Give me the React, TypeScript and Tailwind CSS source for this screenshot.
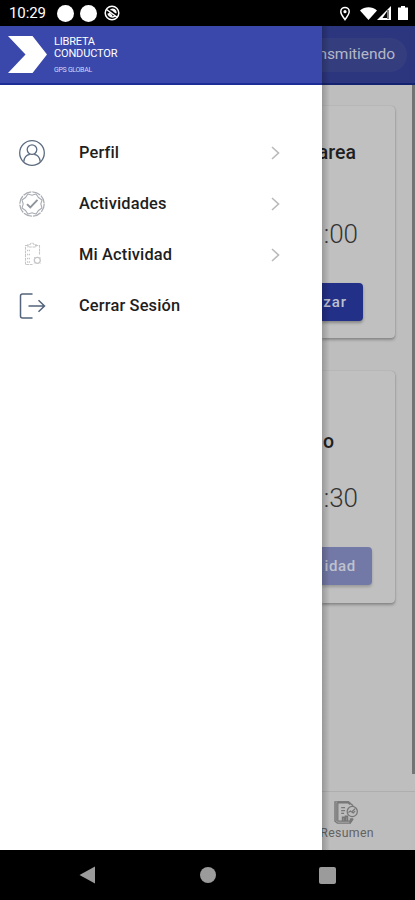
import type { ReactNode } from "react";

const Chevron = () => (
  <svg className="mb-[1px] h-[14px] w-[9px]" viewBox="0 0 9 14" fill="none" stroke="#b9b9bb" strokeWidth="1.6">
    <path d="M1 1l6.5 6L1 13" />
  </svg>
);

const ProfileIcon = () => (
  <svg className="mb-[2px] size-[28px]" viewBox="0 0 28 28" fill="none" stroke="#5d6b80" strokeWidth="1.3">
    <circle cx="14" cy="14" r="12.3" />
    <circle cx="14" cy="10.6" r="4.8" />
    <path d="M5.8 22.8c.4-4.7 3.2-7 6-7.4M22.2 22.8c-.4-4.7-3.2-7-6-7.4" />
  </svg>
);

const BadgeIcon = () => (
  <svg className="mb-[2px] size-[28px]" viewBox="0 0 28 28" fill="none" stroke="#a9adb3">
    <circle cx="14" cy="14" r="12.2" strokeWidth="1.3" strokeDasharray="8.5 1.08" />
    <path d="M10 4l4 1.2L18 4l2.500 3.500L24 10l-1.200 4 1.200 4-3.500 2.500L18 24l-4-1.200L10 24l-2.500-3.500L4 18l1.200-4L4 10l3.500-2.500z" strokeWidth="1.1" />
    <path d="M9 14.200l3.300 3.300 7.200-7.700" stroke="#8e949c" strokeWidth="1.9" />
  </svg>
);

const TaskIcon = () => (
  <svg className="mb-[2px] size-[28px]" viewBox="0 0 28 28" fill="none" stroke="#c6c6c8">
    <path d="M10 4.500H7.500v19h7M17 4.500h4.500v9M10 6V3.500h2l1-1.300h2l1 1.300h2V6z" strokeWidth="1.1" strokeDasharray="3 .7" />
    <path d="M9 9.500h3M9 13.500h3M9 17.500h3M9 21h3" strokeWidth="1.6" strokeDasharray="1.3 .7" />
    <circle cx="19.300" cy="19.300" r="3" strokeWidth="1.3" />
    <path d="M16.200 16.200l1 1m4.200 4.200l1 1m-6.200 0l1-1m4.200-4.200l1-1" />
  </svg>
);

const LogoutIcon = () => (
  <svg className="mb-[2px] size-[28px]" viewBox="0 0 28 28" fill="none" stroke="#53647c" strokeWidth="1.5">
    <path d="M14.500 2H4.500q-2 0-2 2v20q0 2 2 2h10" />
    <path d="M10.500 14H26M20.500 8.200l6 5.800-6 5.800" />
  </svg>
);

function Item({ icon, label, arrow = true }: { icon: ReactNode; label: string; arrow?: boolean }) {
  return (
    <li className="flex h-[51px] items-center pr-[42px] pl-[18px]">
      {icon}
      <span className="ml-[33px] flex-1 text-[16.400px] font-medium tracking-[0.16px] text-[#1e1e1e]">{label}</span>
      {arrow && <Chevron />}
    </li>
  );
}

function StatusBar() {
  return (
    <div className="flex h-[26px] items-center bg-black pl-[9px] text-white">
      <span className="w-[39px] text-[15px] leading-none tracking-[-0.1px]">10:29</span>
      <i className="ml-[9px] size-[17px] rounded-full bg-white" />
      <i className="ml-[6px] size-[17px] rounded-full bg-white" />
      <svg className="ml-[7px] size-[16px]" viewBox="0 0 16 16" fill="none" stroke="white" strokeWidth="1.5">
        <circle cx="8" cy="8" r="6.800" />
        <path d="M2.500 4.500l11 8M4 8.500c1 3 4 4.500 7 2.600M6.500 5c3-2 5.500 0 5.500 3.200M5 8l3 3M8.500 5l3 2.500" />
      </svg>
      <svg className="ml-[219px] h-[15px] w-[12px]" viewBox="0 0 12 16" fill="none" stroke="white" strokeWidth="1.6">
        <path d="M6 14.500C4 11.500 1.500 9 1.500 6a4.500 4.500 0 019 0c0 3-2.500 5.500-4.500 8.500z" />
        <circle cx="6" cy="6" r="1.700" fill="white" stroke="none" />
      </svg>
      <svg className="ml-[9px] h-[13px] w-[17px]" viewBox="0 0 17 13" fill="white">
        <path d="M0 3.600C5-.8 12-.8 17 3.600L8.500 13z" />
      </svg>
      <svg className="h-[14px] w-[14px]" viewBox="0 0 14 14">
        <path d="M14 0v14H0z" fill="white" />
        <path d="M10 5.500V12H5.500z" fill="black" />
        <path d="M11 4v9" stroke="black" strokeWidth="1" />
      </svg>
      <svg className="ml-[7px] h-[14px] w-[10px]" viewBox="0 0 10 14" fill="white">
        <path d="M3 0h4v1.500h3V14H0V1.500h3z" />
      </svg>
    </div>
  );
}

function Drawer() {
  return (
    <aside className="flex w-[322px] shrink-0 flex-col bg-white">
      <header className="flex h-[59px] shrink-0 border-b-2 border-[#1d2d98] bg-[#3a48ab] pt-[10px] pl-[8px]">
        <svg className="h-[37px] w-[39px]" viewBox="0 0 39 37" fill="white">
          <path d="M0 0h24.500L39 18.500 24.500 37H0l17.500-18.500z" />
        </svg>
        <div className="ml-[7px] whitespace-nowrap text-white">
          <div className="text-[11px] leading-[12px] tracking-[-0.200px]">LIBRETA</div>
          <div className="text-[11px] leading-[12px] tracking-[-0.150px]">CONDUCTOR</div>
          <div className="mt-[6px] text-[7px] leading-[9px] tracking-[-0.300px] text-[#d3d7f4]">GPS GLOBAL</div>
        </div>
      </header>
      <ul className="pt-[43px]">
        <Item icon={<ProfileIcon />} label="Perfil" />
        <Item icon={<BadgeIcon />} label="Actividades" />
        <Item icon={<TaskIcon />} label="Mi Actividad" />
        <Item icon={<LogoutIcon />} label="Cerrar Sesión" arrow={false} />
      </ul>
    </aside>
  );
}

function Page() {
  return (
    <main className="relative flex w-[93px] flex-col overflow-hidden bg-[#bebebe]">
      <header className="flex h-[59px] shrink-0 items-center border-b-2 border-[#15226f] bg-[#2b367f]">
        <div className="flex h-[34px] w-[85px] items-center justify-end rounded-r-full bg-[#343e7f] pr-[12px] text-[15.500px] tracking-[-0.050px] text-[#b4b7c8]">nsmitiendo</div>
      </header>
      <div className="flex h-[706px] shrink-0 justify-between">
        <div className="w-[73px] pt-[21px]">
          <section className="h-[232px] rounded-r-[4px] bg-[#c0c0c0] pt-[33px] shadow-[0_2px_3px_rgba(0,0,0,0.28),0_0_1px_rgba(0,0,0,0.25)]">
            <h2 className="flex h-[28px] w-[34px] items-center justify-end text-[19.500px] font-medium text-[#1f1f1f]">area</h2>
            <div className="mt-[51px] flex h-[32px] w-[36px] items-center justify-end text-[26px] font-light text-[#343434]">:00</div>
            <div className="mt-[33px] flex h-[38px] w-[41px] items-center justify-end rounded-r-[4px] bg-[#233087] pr-[16px] text-[15px] font-medium tracking-[0.900px] text-[#bec1d0] shadow-[0_2px_3px_rgba(0,0,0,0.3)]">zar</div>
          </section>
          <section className="mt-[33px] h-[232px] rounded-r-[4px] bg-[#c0c0c0] pt-[57px] shadow-[0_2px_3px_rgba(0,0,0,0.28),0_0_1px_rgba(0,0,0,0.25)]">
            <h2 className="flex h-[28px] w-[12px] items-center justify-end text-[19.500px] font-medium text-[#1f1f1f]">o</h2>
            <div className="mt-[26px] flex h-[32px] w-[36px] items-center justify-end text-[26px] font-light text-[#343434]">:30</div>
            <div className="mt-[33px] flex h-[38px] w-[50px] items-center justify-end rounded-r-[4px] bg-[#7379a6] pr-[16px] text-[15px] font-medium tracking-[0.700px] text-[#bfc1d0] shadow-[0_2px_3px_rgba(0,0,0,0.2)]">idad</div>
          </section>
        </div>
        <div className="h-[689px] w-[3px] bg-[#747474]" />
      </div>
      <nav className="flex-1 border-t border-[#aeaeae] bg-[#bdbdbd] pt-[8px]">
        <svg className="ml-[11px] size-[26px]" viewBox="0 0 27 27" fill="none" stroke="#777" strokeWidth="1.300">
          <path d="M5 2H2v20l2.500 2H18v-5M5 2h11l5 4M5 2v20h13v-3" />
          <path d="M3.300 3v19" strokeWidth="2" stroke="#868686" />
          <path d="M5 2.500h11l2 2" strokeWidth="2.200" />
          <path d="M8.500 8h4M8.500 11h4M8.500 14h3" />
          <path d="M10 22v-4h2v4m1 0v-5h2v5" strokeWidth="1.700" />
          <circle cx="20" cy="12" r="5.300" />
          <path d="M20 12l3-3M16 13l2-1.500 3 2 2-2M20 20l-2.500 4" />
          <path d="M20.500 19l-2.500 4" strokeWidth="2.500" />
        </svg>
        <div className="flex w-[52px] justify-end text-[12.300px] leading-[14px] tracking-[0.350px] whitespace-nowrap text-[#626262]">Resumen</div>
      </nav>
      <div className="pointer-events-none absolute inset-y-0 left-0 w-[8px] bg-linear-to-r from-black/20 to-transparent" />
    </main>
  );
}

export default function App() {
  return (
    <div className="flex h-[900px] w-[415px] flex-col overflow-hidden bg-black font-['Roboto',sans-serif]">
      <StatusBar />
      <div className="flex h-[824px] shrink-0">
        <Drawer />
        <Page />
      </div>
      <footer className="flex flex-1 items-center bg-black pl-[79px]">
        <svg className="h-[18px] w-[17px]" viewBox="0 0 17 18" fill="#9b9b9b"><path d="M16 .5v17L.5 9z" /></svg>
        <i className="ml-[104px] size-[16px] rounded-full bg-[#9b9b9b]" />
        <i className="ml-[103px] size-[17px] rounded-[2px] bg-[#9b9b9b]" />
      </footer>
    </div>
  );
}
